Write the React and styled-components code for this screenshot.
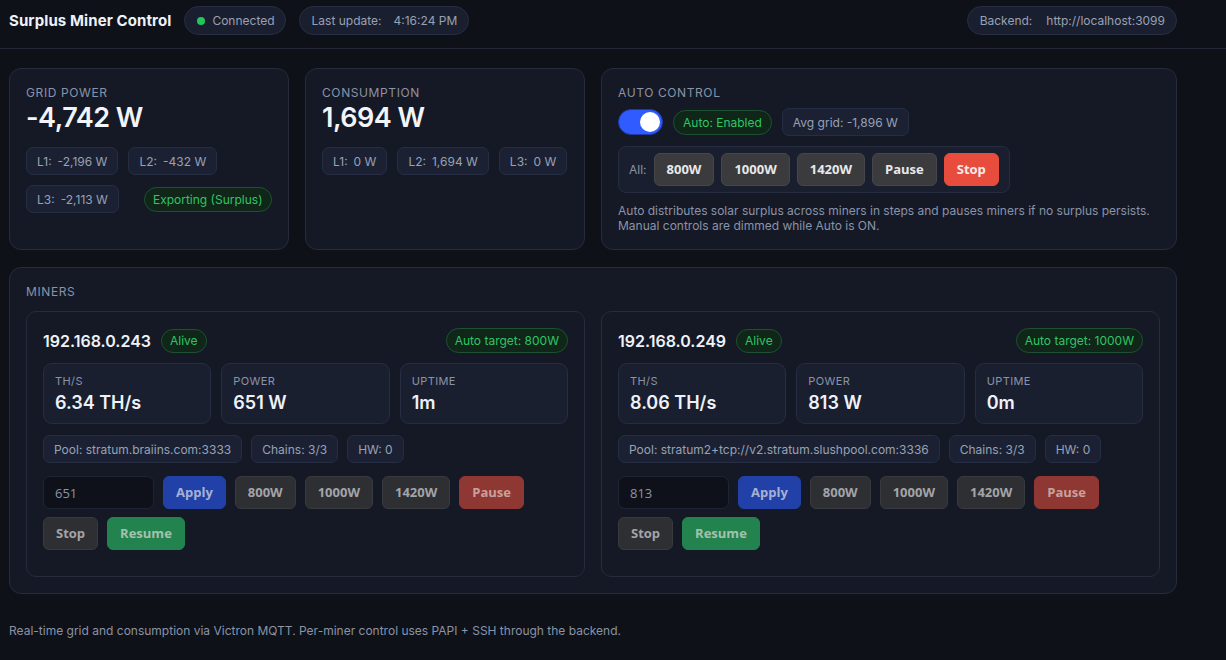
import React from "react";
import styled, { createGlobalStyle, css } from "styled-components";

const GlobalStyle = createGlobalStyle`
  html, body { margin: 0; padding: 0; background: #0e1117; }
  body {
    font-family: Inter, "Noto Sans", "Liberation Sans", sans-serif;
    color: #e6eaf2;
    -webkit-font-smoothing: antialiased;
  }
  * { box-sizing: border-box; }
`;

const BTN_FONT = `"Open Sans", Lato, "DejaVu Sans", sans-serif`;

const Page = styled.div`
  min-height: 660px;
  background: #0e1117;
`;

const HeaderBar = styled.header`
  border-bottom: 1px solid #222735;
  padding: 6px 9px 13px;
`;

const HeaderInner = styled.div`
  width: 1168px;
  display: flex;
  align-items: center;
  gap: 13px;
`;

const Title = styled.h1`
  margin: 0 0 1px;
  font-size: 15px;
  font-weight: 700;
  letter-spacing: 0.1px;
  color: #eef2f8;
`;

const HeaderPill = styled.div`
  display: inline-flex;
  align-items: center;
  gap: ${(p) => p.$gap || 7}px;
  height: 29px;
  padding: 0 ${(p) => p.$pr || 11}px 0 ${(p) => p.$pl || 12}px;
  border-radius: 999px;
  background: #1a1f2f;
  border: 1px solid #272e42;
  font-size: 12px;
  color: #98a1b5;
  ${(p) => p.$push && css`margin-left: auto;`}
`;

const Dot = styled.span`
  width: 8px;
  height: 8px;
  border-radius: 50%;
  background: #22c55e;
`;

const Main = styled.main`
  width: 1168px;
  margin-left: 9px;
  padding-top: 19px;
`;

const TopGrid = styled.div`
  display: grid;
  grid-template-columns: repeat(4, 1fr);
  gap: 17px 16px;
`;

const Card = styled.section`
  background: #151926;
  border: 1px solid #262c3c;
  border-radius: 12px;
  padding: 16px;
  ${(p) => p.$span && css`grid-column: span ${p.$span};`}
`;

const Label = styled.div`
  font-size: 12px;
  line-height: 15px;
  letter-spacing: 0.6px;
  text-transform: uppercase;
  color: #8a93a8;
`;

const BigValue = styled.div`
  margin-top: 1px;
  font-size: 27px;
  line-height: 34px;
  font-weight: 600;
  letter-spacing: -0.5px;
  color: #f1f4f9;
`;

const ChipRow = styled.div`
  margin-top: 12px;
  display: flex;
  flex-wrap: wrap;
  align-items: center;
  gap: 10px;
`;

const Chip = styled.div`
  display: inline-flex;
  align-items: center;
  gap: 6px;
  height: 28px;
  padding: 0 10px;
  border-radius: 7px;
  background: #1b2132;
  border: 1px solid #262e43;
  font-size: 12px;
  color: #98a1b5;
  white-space: nowrap;
`;

const GreenPill = styled.span`
  display: inline-flex;
  align-items: center;
  height: ${(p) => p.$h || 25}px;
  padding: 0 ${(p) => p.$px || 9}px;
  border-radius: 999px;
  background: #0f2619;
  border: 1px solid #1d5131;
  color: #2fc566;
  font-size: 12px;
  white-space: nowrap;
  ${(p) => p.$ml && css`margin-left: ${p.$ml}px;`}
  ${(p) => p.$right && css`margin-left: auto;`}
`;

const ToggleRow = styled.div`
  margin-top: 8px;
  display: flex;
  align-items: center;
  gap: 10px;
`;

const Toggle = styled.div`
  position: relative;
  width: 45px;
  height: 26px;
  border-radius: 999px;
  background: #2f5bff;
  border: 1px solid #1d3aa8;
  flex: none;
`;

const Knob = styled.span`
  position: absolute;
  top: 2px;
  right: 2px;
  width: 20px;
  height: 20px;
  border-radius: 50%;
  background: #ffffff;
`;

const AllGroup = styled.div`
  margin-top: 10px;
  display: inline-flex;
  align-items: center;
  gap: 7px;
  padding: 6px 10px;
  border-radius: 8px;
  background: #1a1f2f;
  border: 1px solid #252c40;
`;

const AllLabel = styled.span`
  font-size: 12px;
  color: #8a93a8;
`;

const variants = {
  gray: css`background: #3b3b3e; border-color: #47474b; color: #e8e8ea;`,
  red: css`background: #e74c3c; border-color: #e74c3c; color: #fbe9e7;`,
  blue: css`background: #2141a8; border-color: #2141a8; color: #a6b1d4;`,
  dimgray: css`background: #2e2f33; border-color: #393a3e; color: #a3a4a8;`,
  dimred: css`background: #8f3833; border-color: #8f3833; color: #c9a09d;`,
  green: css`background: #23834f; border-color: #23834f; color: #a3c2ae;`,
};

const Button = styled.button`
  font-family: ${BTN_FONT};
  font-weight: 700;
  font-size: 13px;
  line-height: 15px;
  height: 33px;
  padding: 0 12px;
  border-radius: 6px;
  border: 1px solid transparent;
  cursor: pointer;
  ${(p) => variants[p.$v || "gray"]}
`;

const Description = styled.p`
  margin: 10px 0 0;
  font-size: 12px;
  line-height: 15px;
  color: #8a93a8;
`;

const MinersCard = styled(Card)`
  margin-top: 17px;
`;

const MinersGrid = styled.div`
  margin-top: 12px;
  display: grid;
  grid-template-columns: 1fr 1fr;
  gap: 16px;
`;

const MinerCard = styled.div`
  background: #151926;
  border: 1px solid #262c3c;
  border-radius: 10px;
  padding: 16px 16px 26px;
`;

const MinerHead = styled.div`
  display: flex;
  align-items: center;
  gap: 10px;
  height: 25px;
`;

const Ip = styled.span`
  font-size: 16px;
  font-weight: 600;
  color: #eef2f8;
`;

const StatGrid = styled.div`
  margin-top: 10px;
  display: grid;
  grid-template-columns: repeat(3, 1fr);
  gap: 10px;
`;

const StatBox = styled.div`
  background: #1a1f30;
  border: 1px solid #262d41;
  border-radius: 9px;
  padding: 10px 11px 8px;
`;

const StatLabel = styled.div`
  font-size: 11px;
  line-height: 14px;
  letter-spacing: 0.4px;
  text-transform: uppercase;
  color: #8a93a8;
`;

const StatValue = styled.div`
  margin-top: 3px;
  font-size: 18px;
  line-height: 24px;
  font-weight: 600;
  color: #eef2f8;
`;

const InfoRow = styled.div`
  margin-top: 11px;
  display: flex;
  flex-wrap: wrap;
  gap: 9px;
`;

const Controls = styled.div`
  margin-top: 13px;
  display: flex;
  flex-wrap: wrap;
  gap: 8px 9px;
`;

const PowerInput = styled.input`
  width: 111px;
  height: 33px;
  padding: 0 11px;
  border-radius: 7px;
  background: #0e1119;
  border: 1px solid #1f2434;
  color: #8a93a8;
  font-family: ${BTN_FONT};
  font-size: 13px;
  outline: none;
`;

const Footer = styled.p`
  margin: 29px 0 0;
  font-size: 12px;
  line-height: 15px;
  color: #8a93a8;
`;

const miners = [
  {
    ip: "192.168.0.243",
    target: "800W",
    ths: "6.34 TH/s",
    power: "651 W",
    uptime: "1m",
    pool: "stratum.braiins.com:3333",
    input: "651",
  },
  {
    ip: "192.168.0.249",
    target: "1000W",
    ths: "8.06 TH/s",
    power: "813 W",
    uptime: "0m",
    pool: "stratum2+tcp://v2.stratum.slushpool.com:3336",
    input: "813",
  },
];

function Phase({ n, v }) {
  return (
    <Chip>
      <span>L{n}:</span>
      <span>{v}</span>
    </Chip>
  );
}

function Miner({ m }) {
  return (
    <MinerCard>
      <MinerHead>
        <Ip>{m.ip}</Ip>
        <GreenPill $h={24} $px={8}>Alive</GreenPill>
        <GreenPill $h={25} $px={8} $right>
          Auto target: {m.target}
        </GreenPill>
      </MinerHead>
      <StatGrid>
        <StatBox>
          <StatLabel>TH/s</StatLabel>
          <StatValue>{m.ths}</StatValue>
        </StatBox>
        <StatBox>
          <StatLabel>Power</StatLabel>
          <StatValue>{m.power}</StatValue>
        </StatBox>
        <StatBox>
          <StatLabel>Uptime</StatLabel>
          <StatValue>{m.uptime}</StatValue>
        </StatBox>
      </StatGrid>
      <InfoRow>
        <Chip>Pool: {m.pool}</Chip>
        <Chip>Chains: 3/3</Chip>
        <Chip>HW: 0</Chip>
      </InfoRow>
      <Controls>
        <PowerInput defaultValue={m.input} />
        <Button $v="blue">Apply</Button>
        <Button $v="dimgray">800W</Button>
        <Button $v="dimgray">1000W</Button>
        <Button $v="dimgray">1420W</Button>
        <Button $v="dimred">Pause</Button>
        <Button $v="dimgray">Stop</Button>
        <Button $v="green">Resume</Button>
      </Controls>
    </MinerCard>
  );
}

export default function App() {
  return (
    <Page>
      <GlobalStyle />
      <HeaderBar>
        <HeaderInner>
          <Title>Surplus Miner Control</Title>
          <HeaderPill $pr={10}>
            <Dot />
            <span>Connected</span>
          </HeaderPill>
          <HeaderPill $gap={12}>
            <span>Last update:</span>
            <span>4:16:24 PM</span>
          </HeaderPill>
          <HeaderPill $push $gap={14}>
            <span>Backend:</span>
            <span>http://localhost:3099</span>
          </HeaderPill>
        </HeaderInner>
      </HeaderBar>
      <Main>
        <TopGrid>
          <Card>
            <Label>Grid Power</Label>
            <BigValue>-4,742 W</BigValue>
            <ChipRow>
              <Phase n={1} v="-2,196 W" />
              <Phase n={2} v="-432 W" />
              <Phase n={3} v="-2,113 W" />
              <GreenPill $ml={15} $px={8}>Exporting (Surplus)</GreenPill>
            </ChipRow>
          </Card>
          <Card>
            <Label>Consumption</Label>
            <BigValue>1,694 W</BigValue>
            <ChipRow>
              <Phase n={1} v="0 W" />
              <Phase n={2} v="1,694 W" />
              <Phase n={3} v="0 W" />
            </ChipRow>
          </Card>
          <Card $span={2}>
            <Label>Auto Control</Label>
            <ToggleRow>
              <Toggle>
                <Knob />
              </Toggle>
              <GreenPill>Auto: Enabled</GreenPill>
              <Chip>Avg grid: -1,896 W</Chip>
            </ToggleRow>
            <AllGroup>
              <AllLabel>All:</AllLabel>
              <Button>800W</Button>
              <Button>1000W</Button>
              <Button>1420W</Button>
              <Button>Pause</Button>
              <Button $v="red">Stop</Button>
            </AllGroup>
            <Description>
              Auto distributes solar surplus across miners in steps and pauses miners if no surplus persists.
              <br />
              Manual controls are dimmed while Auto is ON.
            </Description>
          </Card>
        </TopGrid>
        <MinersCard>
          <Label>Miners</Label>
          <MinersGrid>
            {miners.map((m) => (
              <Miner key={m.ip} m={m} />
            ))}
          </MinersGrid>
        </MinersCard>
        <Footer>
          Real-time grid and consumption via Victron MQTT. Per-miner control uses PAPI + SSH through the backend.
        </Footer>
      </Main>
    </Page>
  );
}
